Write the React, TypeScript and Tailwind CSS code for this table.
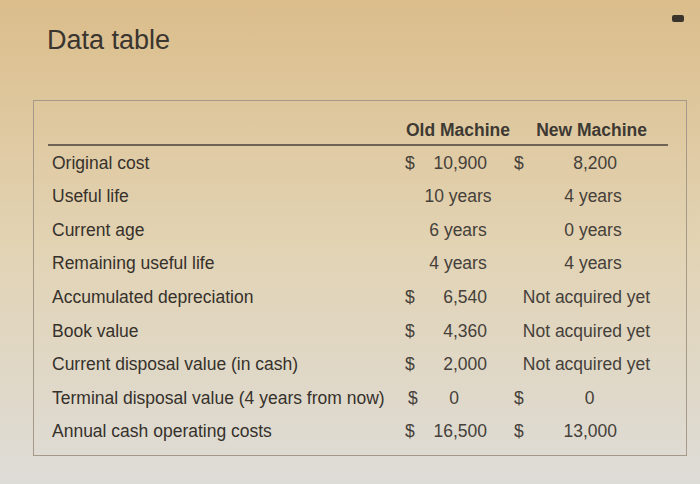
type Cell =
  | { kind: 'money'; amount: string }
  | { kind: 'zero'; amount: string }
  | { kind: 'center'; text: string }
  | { kind: 'span'; text: string };

interface Row {
  label: string;
  old: Cell;
  new: Cell;
}

const rows: Row[] = [
  { label: 'Original cost', old: { kind: 'money', amount: '10,900' }, new: { kind: 'money', amount: '8,200' } },
  { label: 'Useful life', old: { kind: 'center', text: '10 years' }, new: { kind: 'center', text: '4 years' } },
  { label: 'Current age', old: { kind: 'center', text: '6 years' }, new: { kind: 'center', text: '0 years' } },
  { label: 'Remaining useful life', old: { kind: 'center', text: '4 years' }, new: { kind: 'center', text: '4 years' } },
  { label: 'Accumulated depreciation', old: { kind: 'money', amount: '6,540' }, new: { kind: 'span', text: 'Not acquired yet' } },
  { label: 'Book value', old: { kind: 'money', amount: '4,360' }, new: { kind: 'span', text: 'Not acquired yet' } },
  { label: 'Current disposal value (in cash)', old: { kind: 'money', amount: '2,000' }, new: { kind: 'span', text: 'Not acquired yet' } },
  { label: 'Terminal disposal value (4 years from now)', old: { kind: 'zero', amount: '0' }, new: { kind: 'zero', amount: '0' } },
  { label: 'Annual cash operating costs', old: { kind: 'money', amount: '16,500' }, new: { kind: 'money', amount: '13,000' } },
];

// columns: label | $ | old value | gap | $ | new value | tail
const grid = 'grid grid-cols-[355px_16px_72px_22px_16px_91px_48px] items-center';

function OldCell({ cell }: { cell: Cell }) {
  if (cell.kind === 'money')
    return (
      <>
        <span className="pl-[2px]">$</span>
        <span className="text-right pr-[4px]">{cell.amount}</span>
        <span />
      </>
    );
  if (cell.kind === 'zero')
    return (
      <>
        <span className="pl-[5px]">$</span>
        <span className="text-center pr-[2px]">{cell.amount}</span>
        <span />
      </>
    );
  return <span className="col-span-3 text-center">{cell.text}</span>;
}

function NewCell({ cell }: { cell: Cell }) {
  if (cell.kind === 'money')
    return (
      <>
        <span className="pl-[1px]">$</span>
        <span className="text-right pr-[3px]">{cell.amount}</span>
        <span />
      </>
    );
  if (cell.kind === 'zero')
    return (
      <>
        <span className="pl-[1px]">$</span>
        <span className="text-center pl-[30px]">{cell.amount}</span>
        <span />
      </>
    );
  if (cell.kind === 'center') return <span className="col-span-3 text-center pl-[5px]">{cell.text}</span>;
  return <span className="col-span-3 text-center pr-[8px]">{cell.text}</span>;
}

export default function App() {
  return (
    <div
      className="relative w-[700px] h-[484px] overflow-hidden bg-linear-to-b from-[#dbbd8b] via-[#e2d3b3] to-[#dedcd7] text-[#45403a]"
      style={{ fontFamily: '"Liberation Sans", Arial, sans-serif' }}
    >
      <div className="absolute left-[672px] top-[15px] w-[12px] h-[7px] rounded-[2px] bg-[#3b342c]" />

      <h1 className="pl-[47px] pt-[22px] text-[27px] leading-[36px] text-[#3a352f]">Data table</h1>

      <div className="mt-[42px] ml-[33px] w-[654px] h-[356px] border border-[#a59a89]">
        <div className="ml-[14px] mr-[18px]">
          <div className={`${grid} pt-[17px] pb-[2px] border-b-2 border-[#6e6354] text-[17.5px] leading-[24px] font-bold text-[#3e3933]`}>
            <span />
            <span className="col-span-3 text-right pr-[3px]">Old Machine</span>
            <span className="col-span-3 text-right pr-[21px]">New Machine</span>
          </div>

          {rows.map((row, i) => (
            <div key={i} className={`${grid} h-[33.6px] text-[17.5px]`}>
              <span className="pl-[4px] text-[#36312b] whitespace-nowrap">{row.label}</span>
              <OldCell cell={row.old} />
              <NewCell cell={row.new} />
            </div>
          ))}
        </div>
      </div>
    </div>
  );
}
